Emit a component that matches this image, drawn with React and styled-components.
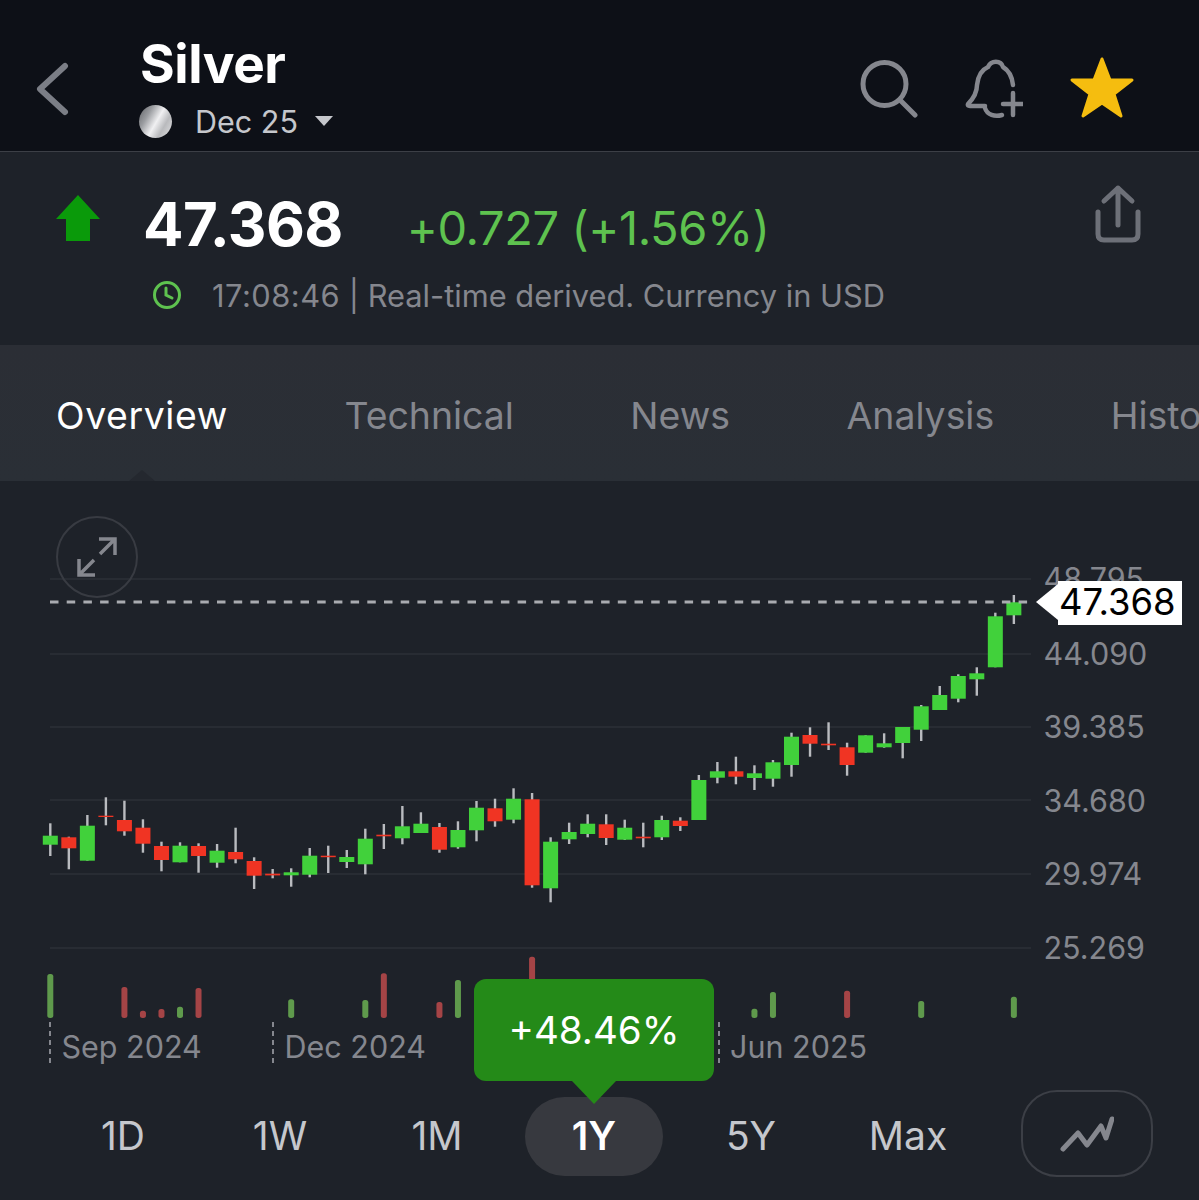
import styled, { createGlobalStyle } from 'styled-components'

const GlobalStyle = createGlobalStyle`
  html, body { margin: 0; padding: 0; background: #1e2229; }
  body { font-family: Inter, "Liberation Sans", sans-serif; }
`

// [up, wickTop, wickBottom, bodyTop, bodyBottom]
const candles = [
  [1, 823.3, 856, 835.7, 844.7], [0, 836.7, 869.3, 837.3, 848.3], [1, 815, 860.7, 825.7, 860.7],
  [0, 797.3, 825.3, 815.7, 817], [0, 800.7, 835.7, 820, 831.3], [0, 819.3, 852.7, 827.7, 843.7],
  [0, 841.7, 871.3, 846, 860], [1, 842.3, 862.3, 845.7, 862.3], [0, 843.3, 872.7, 846, 856],
  [1, 844, 867.7, 850.7, 862.7], [0, 827.7, 863.3, 852, 859.3], [0, 857.3, 889, 861, 875.7],
  [0, 869, 878.3, 873.7, 875.4], [1, 868.3, 886.7, 872.3, 875.3], [1, 848, 877.3, 855.7, 874.7],
  [0, 845.7, 873, 855.7, 857.2], [1, 850, 868, 857, 862], [1, 828.7, 874.3, 838.7, 864.3],
  [0, 824, 849, 834.7, 836.3], [1, 806, 844.3, 826.3, 838.3], [1, 812.3, 833, 823.7, 833],
  [0, 823, 852.7, 827, 849.7], [1, 821.3, 848.7, 830, 847.3], [1, 801, 841.3, 807.7, 830.3],
  [0, 798.7, 826.7, 808.3, 821.3], [1, 788.3, 823.3, 798.7, 819.7], [0, 793, 887.7, 799.3, 885.3],
  [1, 837.3, 902.3, 841.7, 888.3], [1, 822.7, 844, 832, 839.3], [1, 814.3, 837.3, 823.7, 834],
  [0, 814.3, 845, 824.3, 838], [1, 819.7, 840, 827.7, 839.7], [0, 822.7, 847.3, 836.7, 838.3],
  [1, 815.7, 840, 820, 837.3], [0, 817.3, 831, 820.7, 826], [1, 775, 820, 780, 820],
  [1, 762, 783.3, 771.3, 777.7], [0, 756.7, 784.3, 771.3, 776.7], [1, 765.3, 790, 773.3, 778],
  [1, 760, 786.7, 762.3, 778.7], [1, 732.7, 776.7, 736.7, 765], [0, 727.3, 756.7, 735, 743.7],
  [0, 722.3, 750, 743.7, 745.3], [0, 742.7, 775.7, 747.3, 765], [1, 735.3, 752.7, 735.3, 752.7],
  [1, 733.3, 747.7, 743.3, 747.3], [1, 727, 758.3, 727, 743], [1, 705, 741, 706.3, 729.7],
  [1, 686, 710, 695, 710], [1, 674.3, 702.3, 676, 698.7], [1, 667.3, 695.7, 673.3, 679.3],
  [1, 612.7, 667.3, 616.3, 667.3], [1, 595, 624, 602.3, 615.3],
]

// [candle index, up, top]
const volumes = [
  [0, 1, 974], [4, 0, 987], [5, 0, 1010.7], [6, 0, 1009], [7, 1, 1006.7], [8, 0, 988],
  [13, 1, 999.3], [17, 1, 1000], [18, 0, 973.3], [21, 0, 1002], [22, 1, 980], [26, 0, 956.7],
  [38, 1, 1008.7], [39, 1, 992], [43, 0, 990.7], [47, 1, 1001], [52, 1, 996.7],
]

const gridLines = [579, 654, 727, 800, 874, 948]
const axisLabels = [[590, '48.795'], [665, '44.090'], [738, '39.385'], [812, '34.680'], [885, '29.974'], [959, '25.269']]
const dateLabels = [[50, 61.5, 'Sep 2024'], [273, 284.5, 'Dec 2024'], [719, 730, 'Jun 2025']]
const tabs = ['Overview', 'Technical', 'News', 'Analysis', 'History']
const ranges = ['1D', '1W', '1M', '1Y', '5Y', 'Max']

const candleX = (i) => 50.3 + i * 18.53

const Page = styled.div`
  width: 1199px;
  height: 1200px;
  overflow: hidden;
  background: #1e2229;
  color: #fff;
`

const Header = styled.header`
  height: 151px;
  border-bottom: 1px solid #3c3f46;
  background: #0d1017;
  display: flex;
  align-items: flex-start;
  padding-left: 36px;
`

const BackIcon = styled.svg`
  width: 34px;
  height: 56px;
  margin-top: 61px;
  fill: none;
  stroke: #7b7e86;
  stroke-width: 6;
  stroke-linecap: round;
  stroke-linejoin: round;
`

const TitleBlock = styled.div`
  margin-left: 70px;
  padding-top: 32px;
`

const Title = styled.h1`
  margin: 0;
  font-size: 53px;
  line-height: 64px;
  font-weight: 700;
  letter-spacing: -0.4px;
`

const Contract = styled.div`
  display: flex;
  align-items: center;
  margin-top: 3px;
  height: 44px;
  color: #c5c7cc;
  font-size: 30.5px;
`

const Coin = styled.span`
  width: 33px;
  height: 33px;
  margin-left: -1px;
  border-radius: 50%;
  margin-right: 23px;
  background: linear-gradient(120deg, #5d5f63 0%, #9a9ca0 28%, #f0f0f2 52%, #b9babd 72%, #e2e2e4 100%);
`

const Caret = styled.span`
  width: 0;
  height: 0;
  margin-left: 17px;
  border-left: 9.5px solid transparent;
  border-right: 9.5px solid transparent;
  border-top: 10px solid #c5c7cc;
`

const Actions = styled.div`
  margin-left: auto;
  margin-right: 64px;
  margin-top: 58px;
  display: flex;
  align-items: flex-start;
  gap: 41px;
`

const IconSvg = styled.svg`
  display: block;
  fill: none;
  stroke: #85878e;
  stroke-width: ${(p) => p.$weight || 5};
  stroke-linecap: ${(p) => p.$cap || 'round'};
  stroke-linejoin: ${(p) => (p.$cap ? 'miter' : 'round')};
`

const StarIcon = styled.svg`
  display: block;
  margin-left: 5px;
  margin-top: -2px;
  fill: #f5bd0f;
  stroke: #f5bd0f;
  stroke-width: 3;
  stroke-linejoin: round;
`

const Quote = styled.section`
  height: 193px;
  position: relative;
  display: grid;
  grid-template-columns: 89px 1fr;
  grid-template-rows: 80px 50px;
  padding-left: 56px;
  padding-top: 38px;
  box-sizing: border-box;
`

const UpArrow = styled.svg`
  margin-top: 5px;
  fill: #0a9a0a;
`

const PriceRow = styled.div`
  display: flex;
  align-items: baseline;
  height: 68px;
  margin-left: -2px;
`

const Price = styled.span`
  font-size: 60px;
  line-height: 68px;
  font-weight: 700;
  letter-spacing: -0.6px;
`

const Change = styled.span`
  margin-left: 64px;
  font-size: 47px;
  color: #5ec24f;
  letter-spacing: -0.4px;
  position: relative;
  top: -1px;
`

const StatusRow = styled.div`
  grid-column: 1 / 3;
  display: flex;
  align-items: center;
  padding-left: 97px;
  color: #85878e;
  font-size: 30.8px;
  white-space: pre;
`

const ClockIcon = styled.svg`
  margin-right: 31px;
  fill: none;
  stroke: #5ec24f;
  stroke-width: 3;
  stroke-linecap: round;
`

const TimeText = styled.span`
  letter-spacing: 0.5px;
`

const ShareButton = styled.svg`
  position: absolute;
  right: 58px;
  top: 32px;
  fill: none;
  stroke: #6d7078;
  stroke-width: 5;
  stroke-linecap: round;
  stroke-linejoin: round;
`

const TabBar = styled.nav`
  height: 136px;
  position: relative;
  display: flex;
  align-items: center;
  gap: 116.5px;
  padding-left: 56px;
  overflow: hidden;
  white-space: nowrap;
  background: linear-gradient(180deg, #2b2e35 0%, #2a2f36 100%);
`

const Tab = styled.span`
  position: relative;
  top: 2px;
  font-size: 37.4px;
  letter-spacing: ${(p) => (p.$active ? '0.6px' : '0')};
  color: ${(p) => (p.$active ? '#fff' : '#85878e')};
  &:last-of-type {
    margin-left: 3px;
  }
`

const Notch = styled.span`
  position: absolute;
  left: 129px;
  bottom: 0;
  width: 0;
  height: 0;
  border-left: 13px solid transparent;
  border-right: 13px solid transparent;
  border-bottom: 11px solid #24282f;
`

const ChartArea = styled.section`
  position: relative;
  z-index: 2;
  height: 609px;
`

const ChartSvg = styled.svg`
  display: block;
`

const AxisText = styled.text`
  font-family: Inter, "Liberation Sans", sans-serif;
  font-size: 30.5px;
  fill: #85878e;
`

const ExpandButton = styled.div`
  position: absolute;
  left: 56px;
  top: 35px;
  width: 82px;
  height: 82px;
  box-sizing: border-box;
  border: 2px solid #383b42;
  border-radius: 50%;
  display: flex;
  align-items: center;
  justify-content: center;
`

const PriceTag = styled.div`
  position: absolute;
  left: 1058px;
  top: 100px;
  width: 123px;
  height: 44px;
  padding-left: 1px;
  background: #fff;
  color: #000;
  font-size: 36.4px;
  line-height: 42px;
  &::before {
    content: '';
    position: absolute;
    left: -22px;
    top: 3px;
    border-top: 18px solid transparent;
    border-bottom: 18px solid transparent;
    border-right: 22px solid #fff;
  }
`

const ChangePopup = styled.div`
  position: absolute;
  left: 474px;
  top: 498px;
  width: 240px;
  height: 102px;
  border-radius: 12px;
  background: #248a18;
  font-size: 38.5px;
  line-height: 102px;
  text-align: center;
  &::after {
    content: '';
    position: absolute;
    left: 98px;
    top: 102px;
    border-left: 22px solid transparent;
    border-right: 22px solid transparent;
    border-top: 23px solid #248a18;
  }
`

const RangeRow = styled.div`
  height: 110px;
  display: flex;
  align-items: flex-start;
  padding-left: 44.5px;
`

const RangeButton = styled.button`
  width: 157px;
  height: 79px;
  margin-top: 7px;
  padding: 0 0 3px;
  border: 0;
  background: none;
  display: flex;
  align-items: center;
  justify-content: center;
  font-family: inherit;
  font-size: 39px;
  font-weight: ${(p) => (p.$active ? 600 : 400)};
  color: ${(p) => (p.$active ? '#fff' : '#c5c7cc')};
`

const ActivePill = styled.span`
  width: 138px;
  height: 79px;
  margin-bottom: -3px;
  padding-bottom: 3px;
  box-sizing: border-box;
  border-radius: 40px;
  background: #37393f;
  display: flex;
  align-items: center;
  justify-content: center;
`

const ChartTypeToggle = styled.div`
  width: 132px;
  height: 87px;
  margin-left: 34.5px;
  box-sizing: border-box;
  border: 2px solid #3c3f46;
  border-radius: 36px;
  display: flex;
  align-items: center;
  justify-content: center;
`

export default function App() {
  return (
    <Page>
      <GlobalStyle />
      <Header>
        <BackIcon viewBox="0 0 34 56">
          <path d="M29 5 L4 28 L29 51" />
        </BackIcon>
        <TitleBlock>
          <Title>Silver</Title>
          <Contract>
            <Coin />
            Dec 25
            <Caret />
          </Contract>
        </TitleBlock>
        <Actions>
          <IconSvg width="60" height="60" viewBox="0 0 60 60">
            <circle cx="24.5" cy="26" r="21.5" />
            <path d="M40 42 L55 57" />
          </IconSvg>
          <IconSvg width="62" height="62" viewBox="-4 0 62 62" $weight="4.5">
            <path d="M48 27 C47 17 43 12 38 9 C36 2 26 2 23 9 C16 12 13 18 12 27 C12 35 8 41 3 46 Q2 48 5 48 H20" />
            <path d="M20 50 C22 57 30 59 37 57" />
            <path d="M38 46 H58 M48 35 V57" />
          </IconSvg>
          <StarIcon width="66" height="64" viewBox="0 0 66 64">
            <path d="M33 3 L41 24 L63 24 L45 38 L52 60 L33 47 L14 60 L21 38 L3 24 L25 24 Z" />
          </StarIcon>
        </Actions>
      </Header>

      <Quote>
        <UpArrow width="44" height="46" viewBox="0 0 44 46">
          <polygon points="22,0 44,24 34,24 34,46 10,46 10,24 0,24" />
        </UpArrow>
        <PriceRow>
          <Price>47.368</Price>
          <Change>+0.727 (+1.56%)</Change>
        </PriceRow>
        <StatusRow>
          <ClockIcon width="28" height="28" viewBox="0 0 28 28">
            <circle cx="14" cy="14" r="12.5" />
            <path d="M13 7 V14 L19 17" />
          </ClockIcon>
          <TimeText>17:08:46</TimeText> | Real-time derived. Currency in USD
        </StatusRow>
        <ShareButton width="46" height="60" viewBox="0 0 46 60">
          <path d="M23 4 V41 M9 17 L23 4 L37 17" />
          <path d="M3 28 V50 C3 54 5 56 9 56 H37 C41 56 43 54 43 50 V28" />
        </ShareButton>
      </Quote>

      <TabBar>
        {tabs.map((t, i) => (
          <Tab key={t} $active={i === 0}>{t}</Tab>
        ))}
        <Notch />
      </TabBar>

      <ChartArea>
        <ChartSvg width="1199" height="609" viewBox="0 481 1199 609">
          {gridLines.map((y) => (
            <line key={y} x1="50" x2="1031" y1={y} y2={y} stroke="#282c33" strokeWidth="2" />
          ))}
          {axisLabels.map(([y, label]) => (
            <AxisText key={label} x="1043.5" y={y}>{label}</AxisText>
          ))}
          {volumes.map(([i, up, top]) => (
            <rect
              key={i}
              x={candleX(i) - 3}
              y={top}
              width="6"
              height={1018 - top}
              rx="2.5"
              fill={up ? '#5f9a4c' : '#a54446'}
            />
          ))}
          {candles.map(([up, wickTop, wickBottom, bodyTop, bodyBottom], i) => (
            <g key={i}>
              <rect x={candleX(i) - 1.2} y={wickTop} width="2.4" height={wickBottom - wickTop} fill="#b9bbbf" />
              <rect
                x={candleX(i) - 7.5}
                y={bodyTop}
                width="15"
                height={bodyBottom - bodyTop}
                fill={up ? '#41d13b' : '#f03423'}
              />
            </g>
          ))}
          <line x1="50" x2="1031" y1="602" y2="602" stroke="#a9abb0" strokeWidth="3" strokeDasharray="8.5 8.2" />
          {dateLabels.map(([tick, x, label]) => (
            <g key={label}>
              <line x1={tick} x2={tick} y1="1022" y2="1063" stroke="#85878e" strokeWidth="2" strokeDasharray="5 4" />
              <AxisText x={x} y="1058">{label}</AxisText>
            </g>
          ))}
        </ChartSvg>
        <ExpandButton>
          <IconSvg width="40" height="40" viewBox="0 0 40 40" $weight="3.5" $cap="butt">
            <path d="M22 2 H38 V18 M38 2 L23 17 M18 38 H2 V22 M2 38 L17 23" />
          </IconSvg>
        </ExpandButton>
        <PriceTag>47.368</PriceTag>
        <ChangePopup>+48.46%</ChangePopup>
      </ChartArea>

      <RangeRow>
        {ranges.map((r) => (
          <RangeButton key={r} $active={r === '1Y'}>
            {r === '1Y' ? <ActivePill>{r}</ActivePill> : r}
          </RangeButton>
        ))}
        <ChartTypeToggle>
          <IconSvg width="54" height="36" viewBox="0 0 54 36">
            <path d="M3 33 L18 17 L27 29 L41 10 L46 22 L52 3" />
          </IconSvg>
        </ChartTypeToggle>
      </RangeRow>
    </Page>
  )
}
